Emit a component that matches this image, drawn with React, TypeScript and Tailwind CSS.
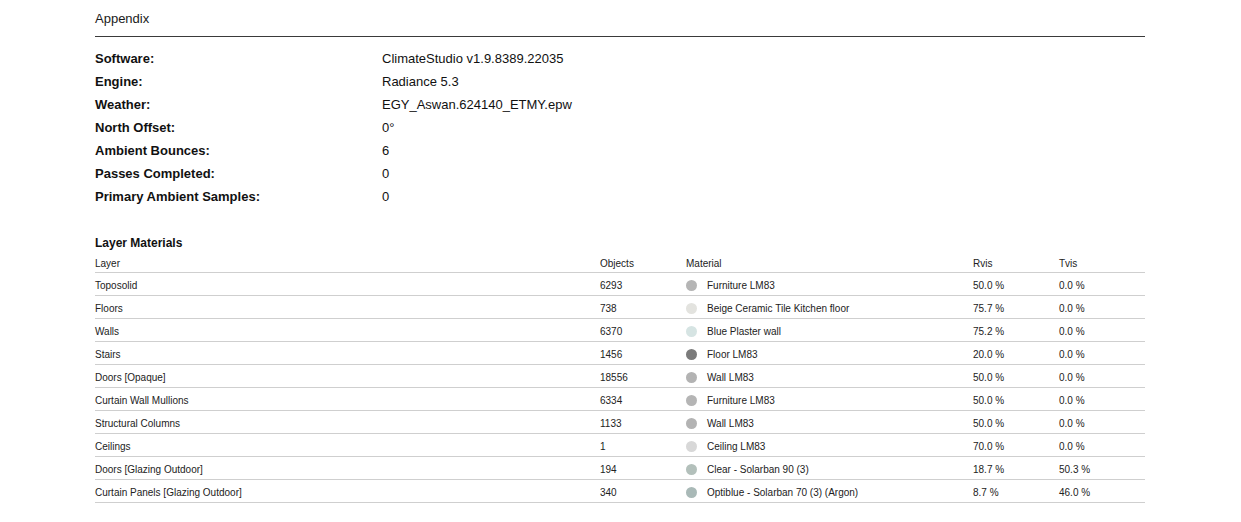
const settings = [
  ["Software:", "ClimateStudio v1.9.8389.22035"],
  ["Engine:", "Radiance 5.3"],
  ["Weather:", "EGY_Aswan.624140_ETMY.epw"],
  ["North Offset:", "0°"],
  ["Ambient Bounces:", "6"],
  ["Passes Completed:", "0"],
  ["Primary Ambient Samples:", "0"],
];

type Row = {
  layer: string;
  objects: string;
  material: string;
  swatch: string;
  rvis: string;
  tvis: string;
};

const layers: Row[] = [
  { layer: "Toposolid", objects: "6293", material: "Furniture LM83", swatch: "#b5b5b5", rvis: "50.0 %", tvis: "0.0 %" },
  { layer: "Floors", objects: "738", material: "Beige Ceramic Tile Kitchen floor", swatch: "#e3e3df", rvis: "75.7 %", tvis: "0.0 %" },
  { layer: "Walls", objects: "6370", material: "Blue Plaster wall", swatch: "#d6e4e3", rvis: "75.2 %", tvis: "0.0 %" },
  { layer: "Stairs", objects: "1456", material: "Floor LM83", swatch: "#7b7b7b", rvis: "20.0 %", tvis: "0.0 %" },
  { layer: "Doors [Opaque]", objects: "18556", material: "Wall LM83", swatch: "#b3b3b3", rvis: "50.0 %", tvis: "0.0 %" },
  { layer: "Curtain Wall Mullions", objects: "6334", material: "Furniture LM83", swatch: "#b5b5b5", rvis: "50.0 %", tvis: "0.0 %" },
  { layer: "Structural Columns", objects: "1133", material: "Wall LM83", swatch: "#b3b3b3", rvis: "50.0 %", tvis: "0.0 %" },
  { layer: "Ceilings", objects: "1", material: "Ceiling LM83", swatch: "#d8d8d8", rvis: "70.0 %", tvis: "0.0 %" },
  { layer: "Doors [Glazing Outdoor]", objects: "194", material: "Clear - Solarban 90 (3)", swatch: "#b3c0bb", rvis: "18.7 %", tvis: "50.3 %" },
  { layer: "Curtain Panels [Glazing Outdoor]", objects: "340", material: "Optiblue - Solarban 70 (3) (Argon)", swatch: "#a9b9b7", rvis: "8.7 %", tvis: "46.0 %" },
];

export default function App() {
  return (
    <div className="w-[1241px] h-[522px] bg-white overflow-hidden font-['Liberation_Sans',Arial,sans-serif]">
      <div className="ml-[95px] w-[1050px]">
        {/* Header */}
        <div className="pt-[11px] pb-[9px] border-b border-[#3a3a3a] text-[13px] leading-[16px] text-[#1a1a1a]">
          Appendix
        </div>

        {/* Simulation settings */}
        <div className="mt-[10px] flex flex-col">
          {settings.map(([label, value]) => (
            <div key={label} className="flex h-[23px] items-center text-[13px] text-[#111]">
              <div className="w-[287px] font-bold">{label}</div>
              <div>{value}</div>
            </div>
          ))}
        </div>

        {/* Layer materials */}
        <div className="mt-[25px] h-[20px] leading-[20px] text-[12px] font-bold text-[#111]">Layer Materials</div>
        <div className="text-[10px] text-[#222]">
          <div className="grid grid-cols-[505px_86px_287px_86px_1fr] h-[20px] pt-[1px] items-center border-b border-[#cfcfcf]">
            <div>Layer</div>
            <div>Objects</div>
            <div>Material</div>
            <div>Rvis</div>
            <div>Tvis</div>
          </div>
          {layers.map((r) => (
            <div
              key={r.layer}
              className="grid grid-cols-[505px_86px_287px_86px_1fr] h-[23px] pt-[2px] items-center border-b border-[#cfcfcf]"
            >
              <div>{r.layer}</div>
              <div>{r.objects}</div>
              <div className="flex items-center gap-[10px]">
                <span className="w-[11px] h-[11px] rounded-full shrink-0" style={{ backgroundColor: r.swatch }} />
                <span>{r.material}</span>
              </div>
              <div>{r.rvis}</div>
              <div>{r.tvis}</div>
            </div>
          ))}
        </div>
      </div>
    </div>
  );
}
